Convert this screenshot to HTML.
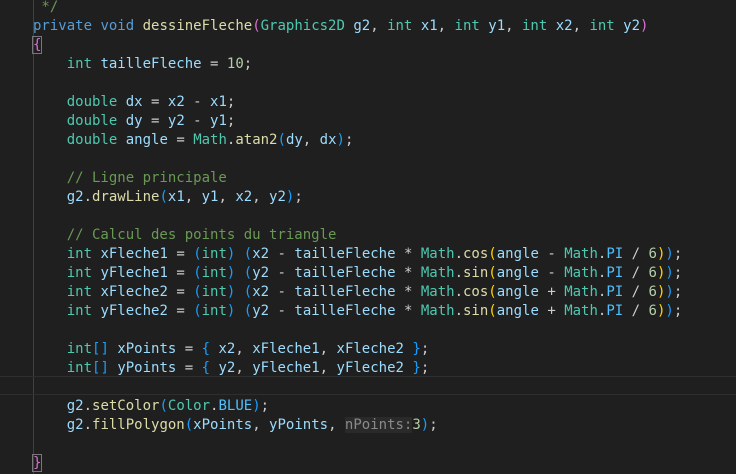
<!DOCTYPE html>
<html><head><meta charset="utf-8"><style>
html,body{margin:0;padding:0;background:#1f1f1f;width:736px;height:474px;overflow:hidden}
.ed{position:relative;width:736px;height:474px;font-family:"DejaVu Sans Mono","Liberation Mono",monospace;font-size:14px;color:#cccccc}
.l{position:absolute;left:33px;height:19px;line-height:19px;white-space:pre}
.g{position:absolute;left:33px;top:0;width:1px;height:474px;background:#404040}
.cur{position:absolute;left:0;top:376px;width:736px;height:17px;border-top:1px solid #2e2e2e;border-bottom:1px solid #2e2e2e}
.k{color:#569cd6}.t{color:#4ec9b0}.v{color:#9cdcfe}.f{color:#dcdcaa}.n{color:#b5cea8}.c{color:#6a9955}.p{color:#da70d6}.b{color:#179fff}.y{color:#ffd700}.cn{color:#4fc1ff}
.bx{outline:1px solid #777;}
.h{color:#8a8a8a;background:#2a2a2a}
</style></head><body><div class="ed">
<div class="g"></div>
<div class="cur"></div>
<div class="l c" style="top:-2px"> */</div>
<div class="l" style="top:17px"><span class="k">private</span> <span class="k">void</span> <span class="f">dessineFleche</span><span class="p">(</span><span class="t">Graphics2D</span> <span class="v">g2</span>, <span class="t">int</span> <span class="v">x1</span>, <span class="t">int</span> <span class="v">y1</span>, <span class="t">int</span> <span class="v">x2</span>, <span class="t">int</span> <span class="v">y2</span><span class="p">)</span></div>
<div class="l" style="top:36px"><span class="p bx">{</span></div>
<div class="l" style="top:55px">    <span class="t">int</span> <span class="v">tailleFleche</span> = <span class="n">10</span>;</div>
<div class="l" style="top:93px">    <span class="t">double</span> <span class="v">dx</span> = <span class="v">x2</span> - <span class="v">x1</span>;</div>
<div class="l" style="top:112px">    <span class="t">double</span> <span class="v">dy</span> = <span class="v">y2</span> - <span class="v">y1</span>;</div>
<div class="l" style="top:131px">    <span class="t">double</span> <span class="v">angle</span> = <span class="t">Math</span>.<span class="f">atan2</span><span class="b">(</span><span class="v">dy</span>, <span class="v">dx</span><span class="b">)</span>;</div>
<div class="l c" style="top:169px">    // Ligne principale</div>
<div class="l" style="top:188px">    <span class="v">g2</span>.<span class="f">drawLine</span><span class="b">(</span><span class="v">x1</span>, <span class="v">y1</span>, <span class="v">x2</span>, <span class="v">y2</span><span class="b">)</span>;</div>
<div class="l c" style="top:226px">    // Calcul des points du triangle</div>
<div class="l" style="top:245px">    <span class="t">int</span> <span class="v">xFleche1</span> = <span class="b">(</span><span class="t">int</span><span class="b">)</span> <span class="b">(</span><span class="v">x2</span> - <span class="v">tailleFleche</span> * <span class="t">Math</span>.<span class="f">cos</span><span class="y">(</span><span class="v">angle</span> - <span class="t">Math</span>.<span class="cn">PI</span> / <span class="n">6</span><span class="y">)</span><span class="b">)</span>;</div>
<div class="l" style="top:264px">    <span class="t">int</span> <span class="v">yFleche1</span> = <span class="b">(</span><span class="t">int</span><span class="b">)</span> <span class="b">(</span><span class="v">y2</span> - <span class="v">tailleFleche</span> * <span class="t">Math</span>.<span class="f">sin</span><span class="y">(</span><span class="v">angle</span> - <span class="t">Math</span>.<span class="cn">PI</span> / <span class="n">6</span><span class="y">)</span><span class="b">)</span>;</div>
<div class="l" style="top:283px">    <span class="t">int</span> <span class="v">xFleche2</span> = <span class="b">(</span><span class="t">int</span><span class="b">)</span> <span class="b">(</span><span class="v">x2</span> - <span class="v">tailleFleche</span> * <span class="t">Math</span>.<span class="f">cos</span><span class="y">(</span><span class="v">angle</span> + <span class="t">Math</span>.<span class="cn">PI</span> / <span class="n">6</span><span class="y">)</span><span class="b">)</span>;</div>
<div class="l" style="top:302px">    <span class="t">int</span> <span class="v">yFleche2</span> = <span class="b">(</span><span class="t">int</span><span class="b">)</span> <span class="b">(</span><span class="v">y2</span> - <span class="v">tailleFleche</span> * <span class="t">Math</span>.<span class="f">sin</span><span class="y">(</span><span class="v">angle</span> + <span class="t">Math</span>.<span class="cn">PI</span> / <span class="n">6</span><span class="y">)</span><span class="b">)</span>;</div>
<div class="l" style="top:340px">    <span class="t">int</span><span class="b">[]</span> <span class="v">xPoints</span> = <span class="b">{</span> <span class="v">x2</span>, <span class="v">xFleche1</span>, <span class="v">xFleche2</span> <span class="b">}</span>;</div>
<div class="l" style="top:359px">    <span class="t">int</span><span class="b">[]</span> <span class="v">yPoints</span> = <span class="b">{</span> <span class="v">y2</span>, <span class="v">yFleche1</span>, <span class="v">yFleche2</span> <span class="b">}</span>;</div>
<div class="l" style="top:397px">    <span class="v">g2</span>.<span class="f">setColor</span><span class="b">(</span><span class="t">Color</span>.<span class="cn">BLUE</span><span class="b">)</span>;</div>
<div class="l" style="top:416px">    <span class="v">g2</span>.<span class="f">fillPolygon</span><span class="b">(</span><span class="v">xPoints</span>, <span class="v">yPoints</span>, <span class="h">nPoints:</span><span class="n">3</span><span class="b">)</span>;</div>
<div class="l" style="top:454px"><span class="p bx">}</span></div>
</div></body></html>
